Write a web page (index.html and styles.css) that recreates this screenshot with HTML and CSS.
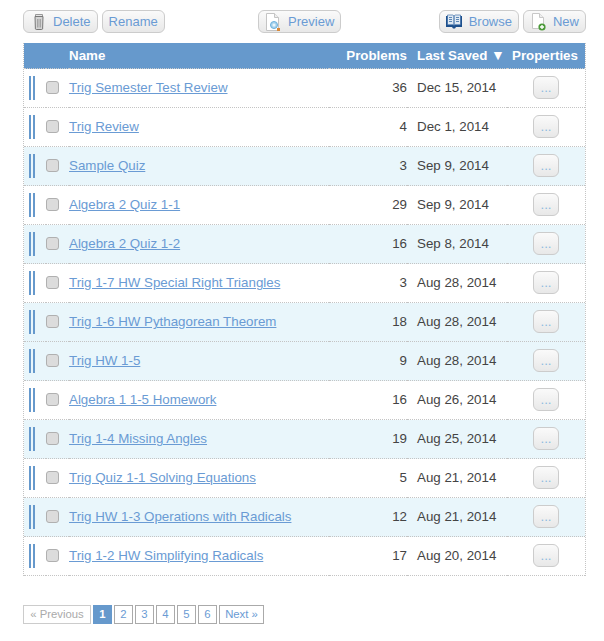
FILE: index.html
```html
<!DOCTYPE html>
<html lang="en">
<head>
<meta charset="utf-8">
<title>Quizzes</title>
<link rel="stylesheet" href="styles.css">
</head>
<body>
<div class="page">
  <div class="toolbar">
    <div class="group">
      <a class="btn"><svg class="icon" width="16" height="18" viewBox="0 0 16 18"><path d="M5.500 1.500h7v2h-7z" fill="#e4e4e4" stroke="#999"/><path d="M5 3.500h8l-.4 12.400a1 1 0 0 1-1 .6H6.400a1 1 0 0 1-1-.6z" fill="#d4d4d4" stroke="#777"/><path d="M7.500 6v8.500M9 6v8.500M10.500 6v8.500" stroke="#a5a5a5"/></svg>Delete</a>
      <a class="btn">Rename</a>
    </div>
    <div class="group center">
      <a class="btn"><svg class="icon" width="16" height="20" viewBox="0 0 16 20"><path d="M1.500 1.500h8l4 4v13h-12z" fill="#fff" stroke="#c4c4c4"/><path d="M9.500 1.500v4h4" fill="#eee" stroke="#c4c4c4"/><circle cx="9" cy="13" r="3.500" fill="#a9d4ee" stroke="#6db0dc"/><circle cx="9" cy="13" r="1.500" fill="#e8f5fc"/><rect x="12" y="16" width="3" height="3" fill="#d98a3a"/></svg>Preview</a>
    </div>
    <div class="group">
      <a class="btn"><svg class="icon" width="16" height="16" viewBox="0 0 16 16"><path d="M0 2h16v11h-6l-1 1.500H7L6 13H0z" fill="#1d4f8c"/><path d="M1.500 1h5.500l1 1v9.500l-1-.7H1.500zM14.500 1H9L8 2v9.500l1-.7h5.500z" fill="#dfe9f3" stroke="#2a5f9f" stroke-width=".6"/><path d="M3 3.500h3M3 5.500h3M3 7.500h3M10 3.500h3M10 5.500h3M10 7.500h3" stroke="#5b86b5"/></svg>Browse</a>
      <a class="btn"><svg class="icon" width="16" height="20" viewBox="0 0 16 20"><path d="M2.500 1.500h7l4 4v11h-11z" fill="#fff" stroke="#c8c8c8"/><path d="M9.500 1.500v4h4" fill="#eee" stroke="#c8c8c8"/><circle cx="12" cy="15" r="3.600" fill="#4c9a3a"/><path d="M10 15h4M12 13v4" stroke="#fff" stroke-width="1.400"/></svg>New</a>
    </div>
  </div>

  <table class="list">
    <thead>
      <tr>
        <th class="c-handle"></th>
        <th class="c-check"></th>
        <th class="c-name">Name</th>
        <th class="c-num">Problems</th>
        <th class="c-date">Last Saved <span class="arrow">▼</span></th>
        <th class="c-prop">Properties</th>
      </tr>
    </thead>
    <tbody>
      <tr><td class="c-handle"><span class="handle"></span></td><td class="c-check"><span class="check"></span></td><td class="c-name"><a>Trig Semester Test Review</a></td><td class="c-num">36</td><td class="c-date">Dec 15, 2014</td><td class="c-prop"><span class="more">...</span></td></tr>
      <tr><td class="c-handle"><span class="handle"></span></td><td class="c-check"><span class="check"></span></td><td class="c-name"><a>Trig Review</a></td><td class="c-num">4</td><td class="c-date">Dec 1, 2014</td><td class="c-prop"><span class="more">...</span></td></tr>
      <tr class="alt"><td class="c-handle"><span class="handle"></span></td><td class="c-check"><span class="check"></span></td><td class="c-name"><a>Sample Quiz</a></td><td class="c-num">3</td><td class="c-date">Sep 9, 2014</td><td class="c-prop"><span class="more">...</span></td></tr>
      <tr><td class="c-handle"><span class="handle"></span></td><td class="c-check"><span class="check"></span></td><td class="c-name"><a>Algebra 2 Quiz 1-1</a></td><td class="c-num">29</td><td class="c-date">Sep 9, 2014</td><td class="c-prop"><span class="more">...</span></td></tr>
      <tr class="alt"><td class="c-handle"><span class="handle"></span></td><td class="c-check"><span class="check"></span></td><td class="c-name"><a>Algebra 2 Quiz 1-2</a></td><td class="c-num">16</td><td class="c-date">Sep 8, 2014</td><td class="c-prop"><span class="more">...</span></td></tr>
      <tr><td class="c-handle"><span class="handle"></span></td><td class="c-check"><span class="check"></span></td><td class="c-name"><a>Trig 1-7 HW Special Right Triangles</a></td><td class="c-num">3</td><td class="c-date">Aug 28, 2014</td><td class="c-prop"><span class="more">...</span></td></tr>
      <tr class="alt"><td class="c-handle"><span class="handle"></span></td><td class="c-check"><span class="check"></span></td><td class="c-name"><a>Trig 1-6 HW Pythagorean Theorem</a></td><td class="c-num">18</td><td class="c-date">Aug 28, 2014</td><td class="c-prop"><span class="more">...</span></td></tr>
      <tr class="alt"><td class="c-handle"><span class="handle"></span></td><td class="c-check"><span class="check"></span></td><td class="c-name"><a>Trig HW 1-5</a></td><td class="c-num">9</td><td class="c-date">Aug 28, 2014</td><td class="c-prop"><span class="more">...</span></td></tr>
      <tr><td class="c-handle"><span class="handle"></span></td><td class="c-check"><span class="check"></span></td><td class="c-name"><a>Algebra 1 1-5 Homework</a></td><td class="c-num">16</td><td class="c-date">Aug 26, 2014</td><td class="c-prop"><span class="more">...</span></td></tr>
      <tr class="alt"><td class="c-handle"><span class="handle"></span></td><td class="c-check"><span class="check"></span></td><td class="c-name"><a>Trig 1-4 Missing Angles</a></td><td class="c-num">19</td><td class="c-date">Aug 25, 2014</td><td class="c-prop"><span class="more">...</span></td></tr>
      <tr><td class="c-handle"><span class="handle"></span></td><td class="c-check"><span class="check"></span></td><td class="c-name"><a>Trig Quiz 1-1 Solving Equations</a></td><td class="c-num">5</td><td class="c-date">Aug 21, 2014</td><td class="c-prop"><span class="more">...</span></td></tr>
      <tr class="alt"><td class="c-handle"><span class="handle"></span></td><td class="c-check"><span class="check"></span></td><td class="c-name"><a>Trig HW 1-3 Operations with Radicals</a></td><td class="c-num">12</td><td class="c-date">Aug 21, 2014</td><td class="c-prop"><span class="more">...</span></td></tr>
      <tr><td class="c-handle"><span class="handle"></span></td><td class="c-check"><span class="check"></span></td><td class="c-name"><a>Trig 1-2 HW Simplifying Radicals</a></td><td class="c-num">17</td><td class="c-date">Aug 20, 2014</td><td class="c-prop"><span class="more">...</span></td></tr>
    </tbody>
  </table>

  <div class="pager">
    <span class="pg off">« Previous</span>
    <span class="pg cur">1</span>
    <a class="pg">2</a>
    <a class="pg">3</a>
    <a class="pg">4</a>
    <a class="pg">5</a>
    <a class="pg">6</a>
    <a class="pg next">Next »</a>
  </div>
</div>
</body>
</html>
```
FILE: styles.css
```css
* { box-sizing: border-box; }
html, body { margin: 0; padding: 0; background: #fff; }
body { font-family: "Liberation Sans", Arial, sans-serif; font-size: 13.33px; color: #444; }
.page { padding: 10px 18px 0 23px; }

.toolbar { display: flex; justify-content: space-between; height: 33px; }
.group { display: flex; gap: 4px; height: 23px; }
.group.center { margin-right: 4px; }
.btn {
  display: flex; align-items: center; gap: 7px; height: 23px; padding: 0 6px;
  border: 1px solid #ccc; border-radius: 6px;
  background: linear-gradient(#fafafa, #e8e8e8);
  color: #6a9bd4; font-size: 13px;
}
.icon { flex: none; margin: -1px 0; }

.list { width: 563px; border-collapse: separate; border-spacing: 0; table-layout: fixed; border-left: 1px dotted #c4c4c4; border-right: 1px dotted #c4c4c4; }
.list th { height: 26px; padding: 0 0 1px; background: #6699cc; color: #fff; font-weight: bold; font-size: 13.33px; text-align: left; border-bottom: 1px dotted #ccc; }
.list td { height: 39px; padding: 0 0 1px; border-bottom: 1px dotted #c4c4c4; vertical-align: middle; }
.alt td { background: #e9f6fb; }

.c-handle { width: 22px; }
.c-check { width: 23px; }
.c-name { width: 260px; }
.list th.c-num, .c-num { width: 78px; text-align: right; }
.list .c-date { width: 100px; padding-left: 10px; white-space: nowrap; }
.list th.c-prop { padding-left: 5px; }
.arrow { font-size: 14px; line-height: 1; }

.handle { display: block; width: 6px; height: 24px; margin-left: 5px; border-left: 2px solid #6699cc; border-right: 2px solid #6699cc; }
.check { display: block; width: 13px; height: 13px; border: 1px solid #b0b0b0; border-radius: 3px; background: #dcdcdc; }
.c-name a { color: #6a9bd4; text-decoration: underline; }
.more {
  display: block; width: 26px; height: 23px; margin: 0 auto; line-height: 22px;
  border: 1px solid #ccc; border-radius: 6px; background: linear-gradient(#fafafa, #e8e8e8);
  color: #8cbbe0; font-size: 13.33px; text-align: center;
}

.pager { display: flex; gap: 2px; margin-top: 29px; }
.pg { display: block; height: 19px; width: 19px; line-height: 17px; border: 1px solid #aaa; font-size: 11.33px; color: #6a9bd4; text-align: center; white-space: nowrap; }
.pg.off { border-color: #ccc; color: #aaa; width: 68px; }
.pg.next { width: 45px; }
.pg.cur { background: #6699cc; border-color: #6699cc; color: #fff; font-weight: bold; }
```
